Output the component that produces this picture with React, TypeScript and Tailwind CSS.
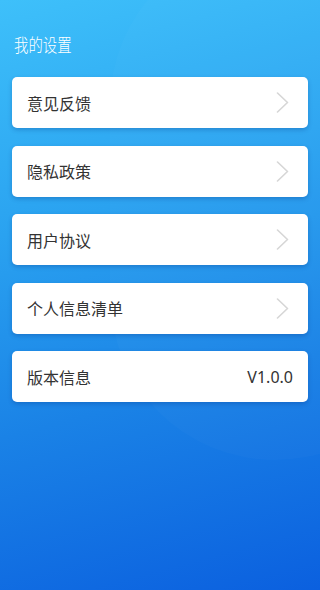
import React from "react";

const items = ["意见反馈", "隐私政策", "用户协议", "个人信息清单"];

function Chevron() {
  return (
    <svg width="13" height="21" viewBox="0 0 13 21" fill="none" className="shrink-0">
      <polyline points="1.5,1 11.5,10.5 1.5,20" stroke="#d6d6d6" strokeWidth="1.6" strokeLinecap="round" strokeLinejoin="round" />
    </svg>
  );
}

export default function App() {
  return (
    <div
      className="relative w-[320px] h-[590px] overflow-hidden bg-[linear-gradient(165deg,#3ec0fa_0%,#2aa2f0_35%,#1a82e6_65%,#0b60df_100%)]"
      style={{ fontFamily: '"Noto Sans CJK SC", "Noto Sans", sans-serif' }}
    >
      <div className="absolute -right-[120px] -top-[60px] w-[330px] h-[520px] rounded-full bg-white/[0.02]" />
      <div className="relative flex flex-col px-3">
        <div className="h-[77px] pt-[34px] pl-[2px]">
          <h1 className="text-[18px] font-light text-white leading-[20px] scale-x-[0.8] origin-left whitespace-nowrap">
            我的设置
          </h1>
        </div>
        <div className="flex flex-col gap-[17.6px]">
          {items.map((t) => (
            <div
              key={t}
              className="h-[51px] bg-white rounded-[5px] shadow-[0_2px_4px_rgba(0,40,120,0.25)] flex items-center justify-between pl-[15px] pr-[19px]"
            >
              <span className="text-[16px] text-[#333333]">{t}</span>
              <Chevron />
            </div>
          ))}
          <div className="h-[51px] bg-white rounded-[5px] shadow-[0_2px_4px_rgba(0,40,120,0.25)] flex items-center justify-between pl-[15px] pr-[15px]">
            <span className="text-[16px] text-[#333333]">版本信息</span>
            <span className="text-[16px] text-[#333333]" style={{ fontFamily: '"Noto Sans", "Roboto", sans-serif' }}>V1.0.0</span>
          </div>
        </div>
      </div>
    </div>
  );
}
